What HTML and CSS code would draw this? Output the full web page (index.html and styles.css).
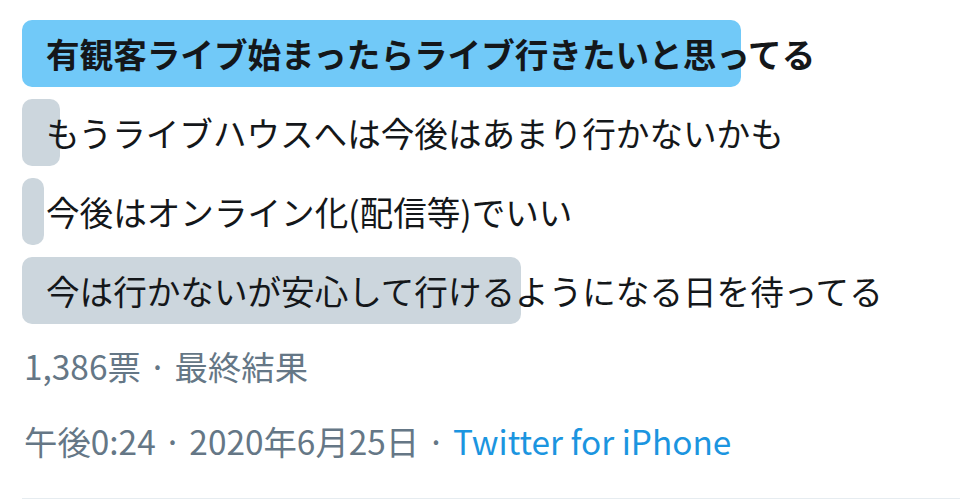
FILE: index.html
```html
<!DOCTYPE html>
<html lang="ja">

<head>
    <meta charset="UTF-8">
    <meta name="viewport" content="width=device-width, initial-scale=1.0">
    <title>Poll</title>
    <link rel="stylesheet" href="styles.css">
</head>

<body>
    <div class="poll">
        <ul class="options">
            <li class="option winner">
                <div class="bar" style="width: 719px;"></div>
                <span class="label">有観客ライブ始まったらライブ行きたいと思ってる</span>
            </li>
            <li class="option">
                <div class="bar" style="width: 38px;"></div>
                <span class="label">もうライブハウスへは今後はあまり行かないかも</span>
            </li>
            <li class="option">
                <div class="bar" style="width: 22px;"></div>
                <span class="label">今後はオンライン化(配信等)でいい</span>
            </li>
            <li class="option">
                <div class="bar" style="width: 499px;"></div>
                <span class="label">今は行かないが安心して行けるようになる日を待ってる</span>
            </li>
        </ul>

        <div class="stats">1,386票 · 最終結果</div>

        <div class="meta">
            午後0:24 · 2020年6月25日 · <a href="#" class="source">Twitter for iPhone</a>
        </div>
    </div>
</body>

</html>
```

FILE: styles.css
```css
body {
    margin: 0;
    background: #ffffff;
    font-family: "Noto Sans CJK JP", "Noto Sans", sans-serif;
    color: #14171a;
}

.poll {
    margin-left: 22px;
    padding-top: 20px;
    padding-bottom: 35px;
    border-bottom: 1px solid #e6ecf0;
}

.options {
    list-style: none;
    margin: 0;
    padding: 0;
    display: flex;
    flex-direction: column;
    gap: 12px;
}

.option {
    position: relative;
    height: 67px;
    display: flex;
    align-items: center;
    padding-left: 24px;
    font-size: 33.6px;
    white-space: nowrap;
}

.bar {
    position: absolute;
    top: 0;
    left: 0;
    bottom: 0;
    background-color: #ccd6dd;
    border-radius: 10px;
}

.winner {
    font-weight: bold;
}

.winner .bar {
    background-color: #71c9f8;
}

.label {
    position: relative;
    line-height: 1;
}

.stats,
.meta {
    font-size: 33.4px;
    line-height: 44px;
    color: #657786;
    padding-left: 2px;
}

.stats {
    margin-top: 20px;
}

.meta {
    margin-top: 31px;
}

.source {
    color: #1b95e0;
    text-decoration: none;
}
```
